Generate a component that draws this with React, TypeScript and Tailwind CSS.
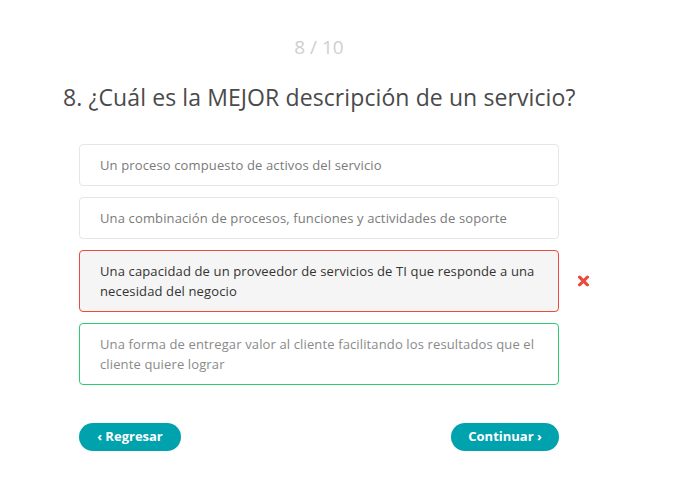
import React from "react";

const options = [
  { text: "Un proceso compuesto de activos del servicio", state: "idle" },
  { text: "Una combinación de procesos, funciones y actividades de soporte", state: "idle" },
  {
    text: "Una capacidad de un proveedor de servicios de TI que responde a una necesidad del negocio",
    state: "wrong",
  },
  {
    text: "Una forma de entregar valor al cliente facilitando los resultados que el cliente quiere lograr",
    state: "right",
  },
];

const styles: Record<string, string> = {
  idle: "border-[#e6e6e6] bg-white text-[#7a7a7a]",
  wrong: "border-[#e74c3c] bg-[#f5f5f5] text-[#333333]",
  right: "border-[#2ecc71] bg-white text-[#8a8a8a]",
};

const WrongMark = () => (
  <svg width="11" height="11" viewBox="0 0 10 10" className="shrink-0">
    <path d="M1.5 1.5 L8.5 8.5 M8.5 1.5 L1.5 8.5" stroke="#e74c3c" strokeWidth="2.8" strokeLinecap="square" />
  </svg>
);

export default function App() {
  return (
    <div className="min-h-screen bg-white font-['Open_Sans',sans-serif]">
      <div className="ml-[63px] w-[512px] pt-[34px]">
        <div className="text-center text-[19px] leading-[26px] text-[#cfcfcf]">8 / 10</div>
        <h1 className="mt-[22px] text-[23px] leading-[30px] tracking-[0.1px] text-[#4a4a4a] whitespace-nowrap">
          8. ¿Cuál es la MEJOR descripción de un servicio?
        </h1>
        <div className="mt-[32px] flex flex-col gap-[11px] px-[16px]">
          {options.map((o) => (
            <div key={o.text} className="relative">
              <div
                className={`rounded-[4px] border px-[20px] py-[10px] text-[13px] leading-[20px] tracking-[0.13px] ${styles[o.state]}`}
              >
                {o.text}
              </div>
              {o.state === "wrong" && (
                <div className="absolute left-[499px] top-1/2 -translate-y-1/2">
                  <WrongMark />
                </div>
              )}
            </div>
          ))}
        </div>
        <div className="mt-[38px] flex justify-between px-[16px]">
          <button className="h-[28px] w-[102px] rounded-full bg-[#00a2ad] text-[13px] font-bold text-white">
            ‹ Regresar
          </button>
          <button className="h-[28px] w-[108px] rounded-full bg-[#00a2ad] text-[13px] font-bold text-white">
            Continuar ›
          </button>
        </div>
      </div>
    </div>
  );
}
